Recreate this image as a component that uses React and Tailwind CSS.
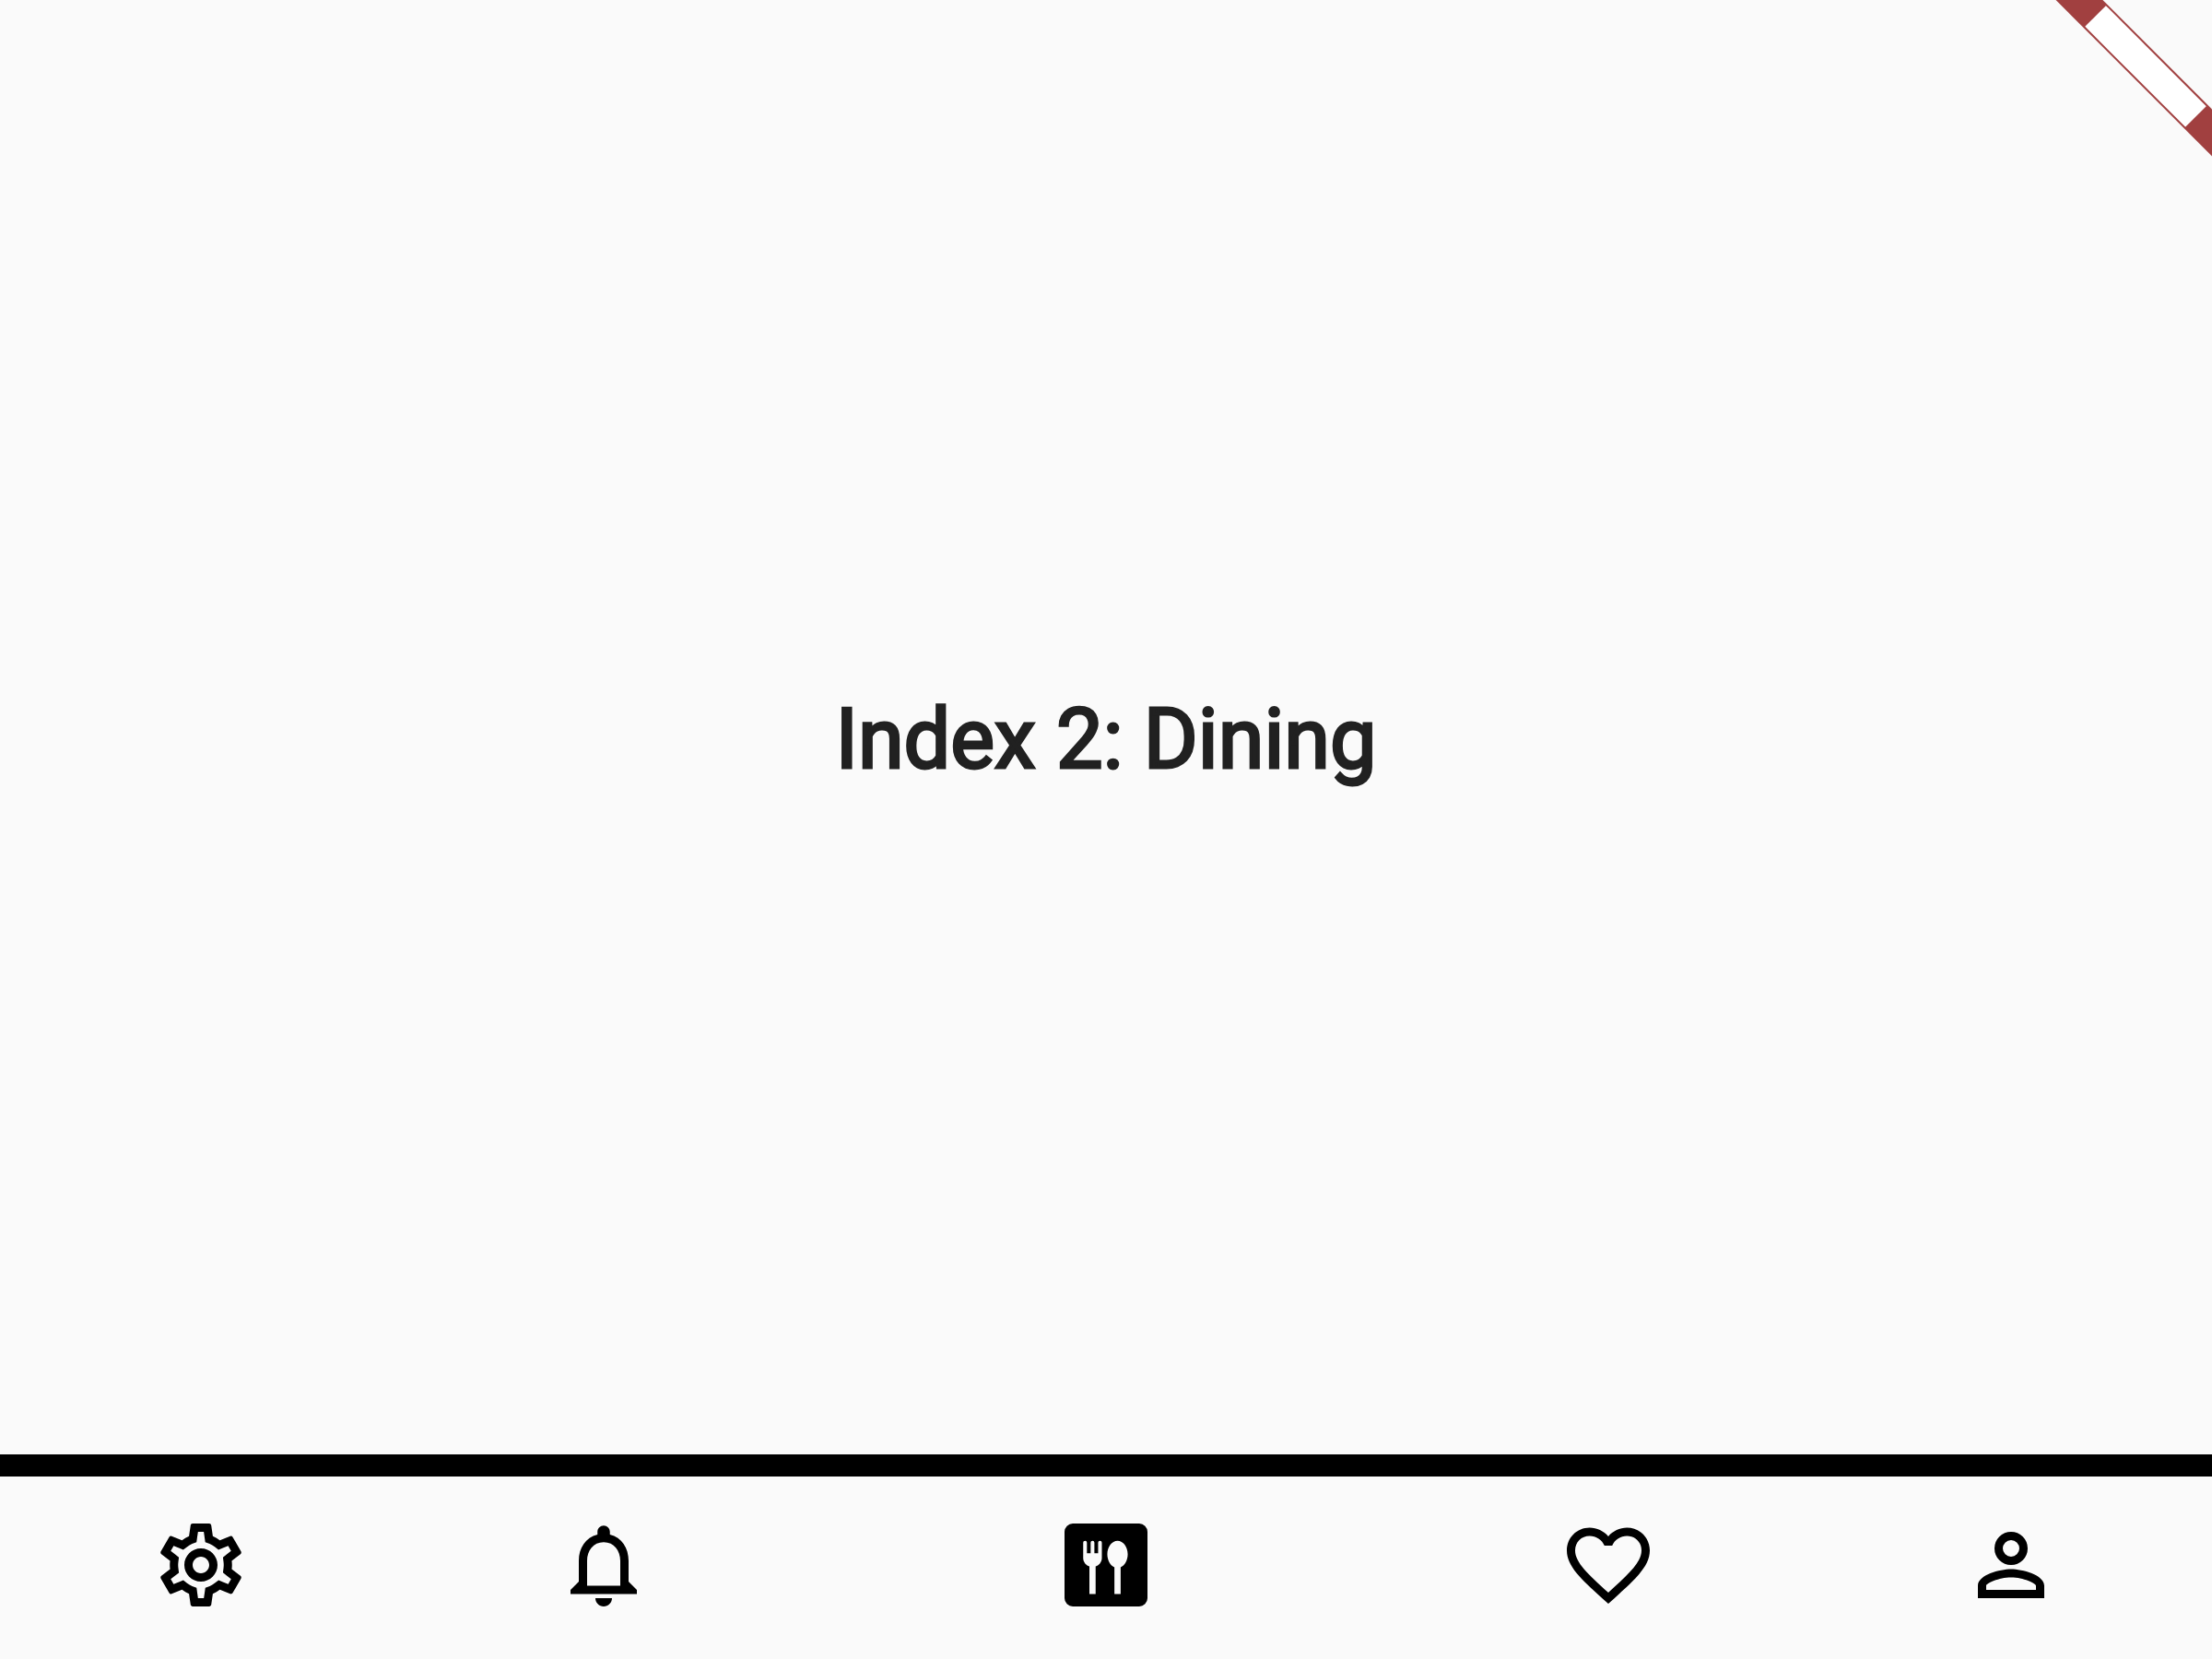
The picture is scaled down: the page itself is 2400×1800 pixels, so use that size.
import { MdFavoriteBorder, MdNotificationsNone, MdOutlineSettings } from "react-icons/md";

function DiningIcon({ className }) {
  return (
    <svg viewBox="0 0 24 24" className={className} fill="currentColor" aria-hidden="true">
      <path
        fillRule="evenodd"
        d="M4 2h16a2 2 0 0 1 2 2v16a2 2 0 0 1-2 2H4a2 2 0 0 1-2-2V4a2 2 0 0 1 2-2z
           M6.95 6.15a.45.45 0 0 0-.45.45v3.7c0 1 .65 1.8 1.5 2.05V19h1.5v-6.65c.85-.25 1.5-1.05 1.5-2.05V6.6a.45.45 0 0 0-.9 0v2.55h-.9V6.6a.45.45 0 0 0-.9 0v2.55h-.9V6.6a.45.45 0 0 0-.45-.45z
           M14.78 6.15c-1.36 0-2.46 1.45-2.46 3.25 0 1.5.75 2.75 1.71 3.15V19h1.5v-6.45c.96-.4 1.71-1.65 1.71-3.15 0-1.8-1.1-3.25-2.46-3.25z"
      />
    </svg>
  );
}

function PersonIcon({ className }) {
  return (
    <svg viewBox="0 0 24 24" className={className} fill="currentColor" aria-hidden="true">
      <path
        fillRule="evenodd"
        d="M12 4a4 4 0 1 0 0 8 4 4 0 0 0 0-8zm0 2a2 2 0 1 1 0 4 2 2 0 0 1 0-4z
           M12 13c-2.67 0-8 1.34-8 4v3h16v-3c0-2.66-5.33-4-8-4zm0 2c2.97 0 6 1.4 6 2v1H6v-1c0-.6 3.03-2 6-2z"
      />
    </svg>
  );
}

const items = [
  { label: "Settings", Icon: MdOutlineSettings, grow: "grow-2" },
  { label: "Notifications", Icon: MdNotificationsNone, grow: "grow-2" },
  { label: "Dining", Icon: DiningIcon, grow: "grow-3", active: true },
  { label: "Favorites", Icon: MdFavoriteBorder, grow: "grow-2" },
  { label: "Profile", Icon: PersonIcon, grow: "grow-2" },
];

function CornerBanner() {
  return (
    <div className="pointer-events-none absolute top-0 right-0 flex size-48 items-start justify-end overflow-hidden">
      <div className="flex size-36 shrink-0 items-center justify-center">
        <div className="flex w-72 shrink-0 rotate-45 justify-center bg-[#a14040] py-0.5">
          <div className="h-8 w-[154px] bg-white" />
        </div>
      </div>
    </div>
  );
}

export default function App() {
  return (
    <div className="relative flex min-h-screen flex-col bg-[#fafafa] font-['Roboto',sans-serif]">
      <CornerBanner />
      <main className="flex grow items-center justify-center pt-7">
        <h1 className="text-[90px] leading-[106px] font-normal text-[#212121] [-webkit-text-stroke:3px_#212121]">
          Index 2: Dining
        </h1>
      </main>
      <nav className="flex border-t-24 border-black pt-[42px] pb-12">
        {items.map(({ label, Icon, grow, active }) => (
          <button
            key={label}
            type="button"
            aria-label={label}
            aria-current={active ? "page" : undefined}
            className={`flex basis-0 justify-center text-black ${grow}`}
          >
            <Icon className="size-[108px]" />
          </button>
        ))}
      </nav>
    </div>
  );
}
